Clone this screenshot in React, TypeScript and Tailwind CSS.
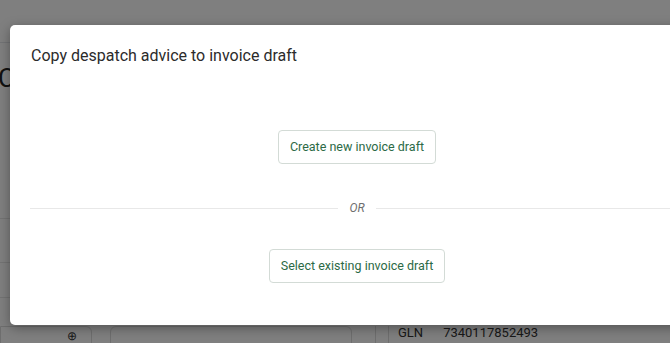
import React from "react";

export default function App() {
  return (
    <div className="relative w-[670px] h-[343px] overflow-hidden bg-white font-['Roboto',sans-serif]">
      {/* background page */}
      <div className="flex flex-col w-full h-full">
        <div className="h-[43px] border-b border-gray-200" />
        <div className="h-[66px] flex items-center pl-0 pt-[4px]">
          <span className="text-[26px] text-[#222] ml-[-2px]">Create</span>
        </div>
        <div className="h-[110px] border-b border-[#e6e6e6]" />
        <div className="h-[44px] border-b border-[#e6e6e6]" />
        <div className="h-[35px] border-b border-[#e6e6e6]" />
        <div className="flex-1 flex items-end">
          <div className="flex w-full h-[17px] items-start">
            <div className="w-[92px] h-[20px] border border-[#ddd] rounded-tr-md flex justify-end pr-[14px] text-[12px] text-[#333]">⊕</div>
            <div className="ml-[18px] w-[242px] h-[20px] border border-[#ddd] rounded-t-md" />
            <div className="ml-[23px] w-[13px] h-[20px] border-l border-[#ddd]" />
            <div className="flex items-start text-[13px] text-[#333] leading-[14px] border-l border-[#ddd] pl-[9px] h-[20px]">
              <span className="pr-[20px]">GLN</span>
              <span>7340117852493</span>
            </div>
          </div>
        </div>
      </div>

      {/* overlay */}
      <div className="absolute inset-0 bg-black/50" />

      {/* modal */}
      <div className="absolute left-[10px] top-[25px] w-[694px] h-[300px] bg-white rounded-[5px] shadow-[0_3px_12px_rgba(0,0,0,0.35)] flex flex-col">
        <h2 className="pt-[19px] pl-[21px] text-[16px] leading-[24px] text-[#2b2b2b]">
          Copy despatch advice to invoice draft
        </h2>
        <div className="flex justify-center mt-[62px]">
          <button className="h-[34px] px-[11px] border border-[#d3dbd6] rounded-[4px] text-[12.5px] text-[#2c6a46] bg-white">
            Create new invoice draft
          </button>
        </div>
        <div className="flex items-center gap-[11px] px-[20px] mt-[37px]">
          <div className="flex-1 h-px bg-[#e8e8e8]" />
          <span className="text-[12px] italic text-[#6f6f6f] leading-[14px]">OR</span>
          <div className="flex-1 h-px bg-[#e8e8e8]" />
        </div>
        <div className="flex justify-center mt-[34px]">
          <button className="h-[34px] px-[11px] border border-[#d3dbd6] rounded-[4px] text-[12.5px] text-[#2c6a46] bg-white">
            Select existing invoice draft
          </button>
        </div>
      </div>
    </div>
  );
}
